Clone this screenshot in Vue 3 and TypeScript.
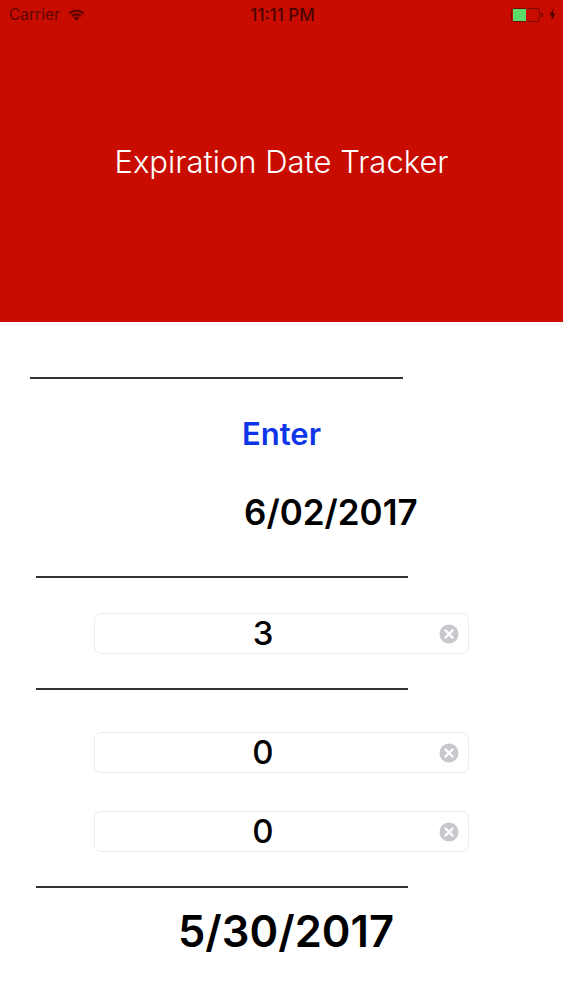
<script setup lang="ts">
const rows = { first: '3', second: '0', third: '0' }
</script>

<template>
  <div class="screen">
    <header class="hero">
      <div class="status">
        <div class="status-left">
          <span>Carrier</span>
          <svg class="wifi" width="17" height="12" viewBox="0 0 17 12">
            <path d="M0.6 3.8 A11 11 0 0 1 16.4 3.8 L14.8 5.5 A8.8 8.8 0 0 0 2.2 5.5 Z" fill="#5e0500" />
            <path d="M3.2 6.4 A7.4 7.4 0 0 1 13.8 6.4 L12.2 8 A5.2 5.2 0 0 0 4.8 8 Z" fill="#5e0500" />
            <path d="M5.7 8.9 A4 4 0 0 1 11.3 8.9 L8.5 11.8 Z" fill="#5e0500" />
          </svg>
        </div>
        <span class="clock">11:11 PM</span>
        <div class="status-right">
          <span class="battery"><span class="charge"></span></span>
          <span class="nub"></span>
          <svg class="bolt" width="7" height="13" viewBox="0 0 6 11">
            <path d="M4 0 L0.4 6.2 H2.6 L1.8 11 L5.6 4.6 H3.3 Z" fill="#4a0400" />
          </svg>
        </div>
      </div>
      <h1 class="title">Expiration Date Tracker</h1>
    </header>

    <main class="body">
      <div class="rule rule-top"></div>
      <div class="enter">Enter</div>
      <div class="date-in">6/02/2017</div>
      <div class="rule rule-a"></div>
      <div class="field field-a">
        <span class="value">{{ rows.first }}</span>
        <svg class="clear" width="20" height="20" viewBox="0 0 20 20">
          <circle cx="10" cy="10" r="9.5" fill="#c7c7cc" />
          <path d="M6.4 6.4 L13.6 13.6 M13.6 6.4 L6.4 13.6" stroke="#fff" stroke-width="2.2" stroke-linecap="round" />
        </svg>
      </div>
      <div class="rule rule-b"></div>
      <div class="field field-b">
        <span class="value">{{ rows.second }}</span>
        <svg class="clear" width="20" height="20" viewBox="0 0 20 20">
          <circle cx="10" cy="10" r="9.5" fill="#c7c7cc" />
          <path d="M6.4 6.4 L13.6 13.6 M13.6 6.4 L6.4 13.6" stroke="#fff" stroke-width="2.2" stroke-linecap="round" />
        </svg>
      </div>
      <div class="field field-c">
        <span class="value">{{ rows.third }}</span>
        <svg class="clear" width="20" height="20" viewBox="0 0 20 20">
          <circle cx="10" cy="10" r="9.5" fill="#c7c7cc" />
          <path d="M6.4 6.4 L13.6 13.6 M13.6 6.4 L6.4 13.6" stroke="#fff" stroke-width="2.2" stroke-linecap="round" />
        </svg>
      </div>
      <div class="rule rule-d"></div>
      <div class="result">5/30/2017</div>
    </main>
  </div>
</template>

<style scoped>
.screen {
  width: 563px;
  height: 1000px;
  overflow: hidden;
  background: #fff;
  font-family: Inter, "Liberation Sans", Arial, sans-serif;
}
.hero {
  height: 322px;
  background: #c90c00;
  display: flex;
  flex-direction: column;
}
.status {
  height: 29px;
  display: grid;
  grid-template-columns: 1fr auto 1fr;
  align-items: center;
  padding: 0 7px 0 9px;
  color: #5e0500;
  font-size: 15.5px;
}
.status-left {
  display: flex;
  align-items: center;
  gap: 8px;
}
.clock {
  color: #4a0400;
  font-size: 17px;
  font-weight: 500;
}
.status-right {
  display: flex;
  align-items: center;
  justify-content: flex-end;
}
.battery {
  width: 29px;
  height: 14px;
  box-sizing: border-box;
  border: 1px solid #7a0700;
  border-radius: 3px;
  padding: 0 1px;
  display: flex;
}
.charge {
  width: 13px;
  background: #5bd96a;
}
.nub {
  width: 2px;
  height: 4px;
  margin-left: 1px;
  background: #7a0700;
}
.bolt {
  margin-left: 6px;
}
.title {
  margin: 115px 0 0;
  text-align: center;
  color: #fff;
  font-size: 31px;
  font-weight: 300;
  line-height: 36px;
}
.body {
  display: flex;
  flex-direction: column;
  align-items: flex-start;
}
.rule {
  width: 372px;
  height: 2px;
  background: #333;
}
.rule-top { margin: 55px 0 0 30px; width: 373px; }
.rule-a { margin: 0 0 0 36px; }
.rule-b { margin: 34px 0 0 36px; }
.rule-d { margin: 34px 0 0 36px; }
.enter {
  width: 100%;
  margin-top: 35px;
  text-align: center;
  color: #0f35e8;
  font-size: 31px;
  font-weight: 600;
  line-height: 40px;
}
.date-in {
  margin: 37px 0 43px 244px;
  font-size: 35px;
  font-weight: 600;
  line-height: 42px;
  color: #000;
}
.field {
  width: 375px;
  height: 41px;
  box-sizing: border-box;
  margin-left: 94px;
  border: 1px solid #ececec;
  border-radius: 7px;
  display: flex;
  align-items: center;
  justify-content: flex-end;
  padding-right: 9px;
  position: relative;
}
.field-a { margin-top: 35px; }
.field-b { margin-top: 42px; }
.field-c { margin-top: 38px; }
.value {
  position: absolute;
  left: 0;
  width: 336px;
  text-align: center;
  color: #000;
  font-size: 33px;
  line-height: 39px;
  font-weight: 500;
}
.result {
  margin: 15px 0 0 178px;
  color: #000;
  font-size: 43.5px;
  font-weight: 600;
  line-height: 56px;
}
</style>

<style>
body { margin: 0; }
</style>
